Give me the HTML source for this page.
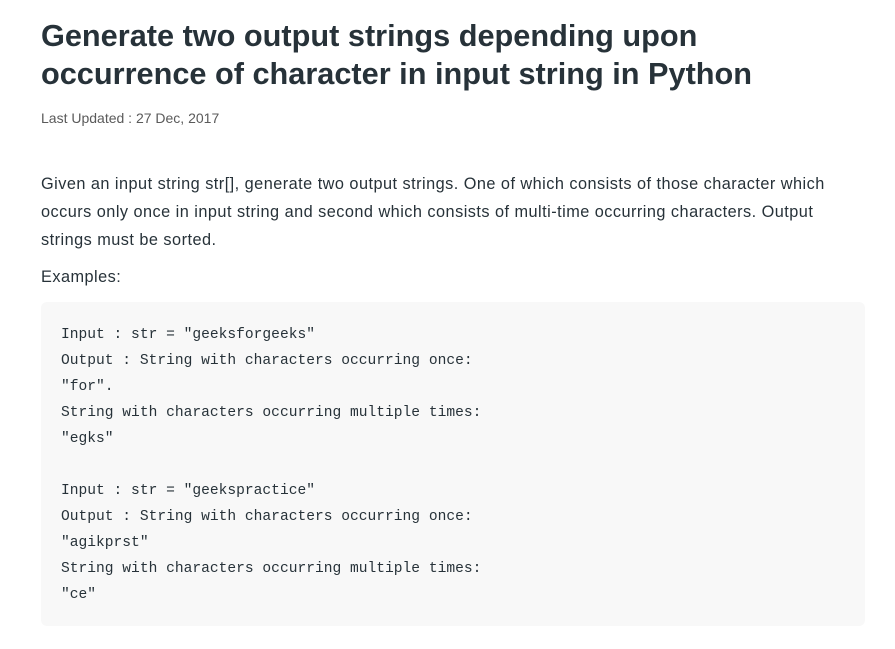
<!DOCTYPE html>
<html><head><meta charset="utf-8"><style>
body{margin:0;background:#fff;width:895px;height:649px;overflow:hidden;font-family:"Liberation Sans",sans-serif;color:#273239}
h1{position:absolute;left:41px;top:17px;margin:0;font-size:30.7px;line-height:38px;font-weight:bold;color:#273239;letter-spacing:0px;white-space:nowrap}
.date{position:absolute;left:41px;top:110px;font-size:14px;color:#5a5a5a}
.p{position:absolute;left:41px;top:170px;font-size:16.3px;line-height:28px;color:#273239;letter-spacing:0.47px;white-space:nowrap}
.ex{position:absolute;left:41px;top:268px;font-size:16.3px;color:#273239;letter-spacing:0.47px}
pre{position:absolute;left:41px;top:302px;width:824px;height:324px;margin:0;background:#f8f8f8;border-radius:6px;box-sizing:border-box;padding:20px 20px;font-family:"Liberation Mono",monospace;font-size:14.6px;line-height:26px;color:#273239}
</style></head><body>
<h1>Generate two output strings depending upon<br>occurrence of character in input string in Python</h1>
<div class="date">Last Updated : 27 Dec, 2017</div>
<div class="p">Given an input string str[], generate two output strings. One of which consists of those character which<br>occurs only once in input string and second which consists of multi-time occurring characters. Output<br>strings must be sorted.</div>
<div class="ex">Examples:</div>
<pre>Input : str = "geeksforgeeks"
Output : String with characters occurring once:
"for".
String with characters occurring multiple times:
"egks"

Input : str = "geekspractice"
Output : String with characters occurring once:
"agikprst"
String with characters occurring multiple times:
"ce"</pre>
</body></html>
